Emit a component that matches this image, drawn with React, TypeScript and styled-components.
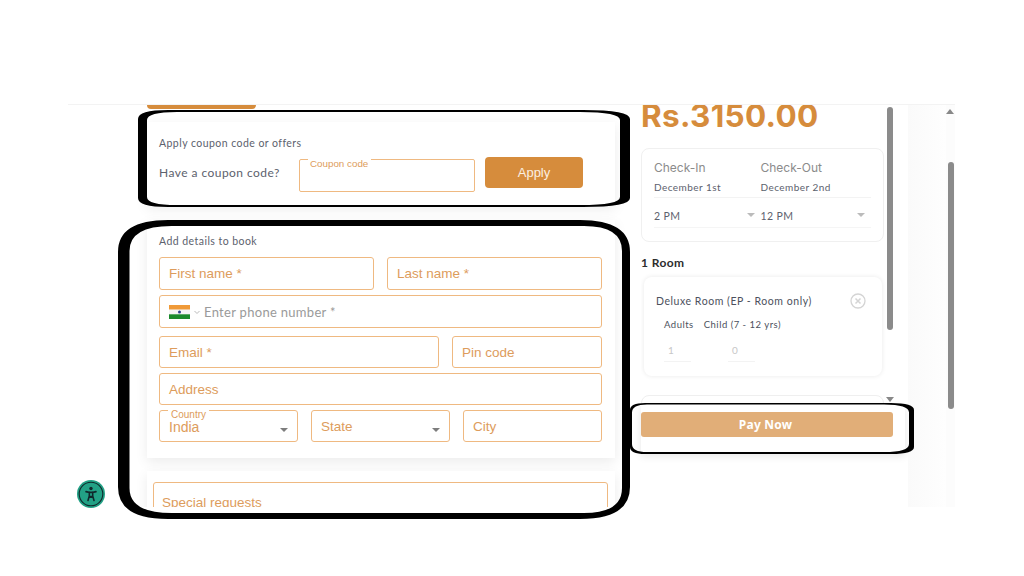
import React from "react";
import styled, { createGlobalStyle } from "styled-components";

const Global = createGlobalStyle`
  html, body { margin: 0; padding: 0; background: #fff; }
  * { box-sizing: border-box; }
`;
const orange = "#d68c3c";
const line = "#efb981";
const text = "#dd9c5c";
const ui = `"Lato", "Noto Sans", sans-serif`;
const arial = `"Liberation Sans", Arial, sans-serif`;

const Page = styled.div`
  position: relative; width: 1024px; height: 576px; overflow: hidden; padding: 104px 0 0 68px; background: #fff;
`;
const Frame = styled.div`
  display: flex; width: 887px; height: 403px; overflow: hidden; border-top: 1px solid #f3f3f3;
`;
const LeftColumn = styled.div`
  flex: 0 0 573px; padding: 0 26px 0 79px; overflow: hidden;
`;
const TopTab = styled.div`
  width: 109px; height: 4px; background: ${orange}; border-radius: 0 0 4px 4px;
`;
const Card = styled.section<{ $top: number; $h: number; $pad?: string }>`
  margin-top: ${(p) => p.$top}px; min-height: ${(p) => p.$h}px; background: #fff; padding: ${(p) => p.$pad ?? "14px 13px 0 12px"};
  box-shadow: 0 4px 12px rgba(0, 0, 0, 0.08);
`;
const CardTitle = styled.div`
  font: 400 10.5px/14px ${ui}; letter-spacing: 0.45px; color: #5c616d;
`;
const CouponRow = styled.div`
  display: flex; align-items: flex-start; margin-top: 7px;
`;
const CouponLabel = styled.span`
  flex: 0 0 140px; margin-top: 7px; font: 400 12px/18px ${ui}; letter-spacing: 0.45px; color: #5c616d;
`;
const CouponField = styled.fieldset`
  width: 176px; height: 37px; margin: -2.5px 0 0; padding: 0 0 0 8px; border: 1.5px solid ${line}; border-radius: 2px;
`;
const CouponLegend = styled.legend`
  padding: 0 3px 0 2px; font: 400 9.8px/10px ${arial}; color: ${text}; transform: translateY(4px);
`;
const ApplyButton = styled.button`
  width: 98px; height: 31px; margin: 0 0 0 10px; border: 0; border-radius: 4px; background: ${orange}; color: #fbefe2; font: 400 13px ${arial};
`;
const Form = styled.div`
  display: flex; flex-direction: column; gap: 5px; margin-top: 9px;
`;
const Row = styled.div<{ $top?: number }>`
  display: flex; gap: 13px; margin-top: ${(p) => p.$top ?? 0}px;
`;
const Field = styled.div<{ $w?: number; $h?: number }>`
  position: relative; display: flex; align-items: center; flex: ${(p) => (p.$w ? `0 0 ${p.$w}px` : "1")};
  height: ${(p) => p.$h ?? 32}px; padding-left: 9px; border: 1px solid ${line}; border-radius: 3px;
  font: 400 13.5px ${arial}; color: ${text}; background: #fff;
`;
const PhoneText = styled.span`
  margin-left: 3px; font: 400 13px ${ui}; letter-spacing: 0.3px; color: #9a9a9a;
`;
const Caret = styled.i`
  position: absolute; right: 9px; top: 17px; width: 0; height: 0;
  border-left: 4px solid transparent; border-right: 4px solid transparent; border-top: 4px solid #7d7d7d;
`;
const FloatLabel = styled.span`
  position: absolute; left: 8px; top: -2px; padding: 0 3px; background: #fff; font: 400 10px/11px ${arial}; color: ${text};
`;
const CountryValue = styled.span`
  margin-top: 2px; font-size: 14px;
`;
const RequestField = styled.div`
  height: 60px; margin: 0 7px 0 6px; padding: 12px 8px; border: 1px solid ${line}; border-radius: 3px; font: 400 13.5px ${arial}; color: ${text};
`;
const RightColumn = styled.div`
  flex: 0 0 267px; display: flex; flex-direction: column;
`;
const ScrollRow = styled.div`
  display: flex; height: 299px; overflow: hidden;
`;
const Summary = styled.div`
  flex: 0 0 245px;
`;
const Price = styled.div`
  margin-top: -8px; font: 700 31.5px/38px "Inter", sans-serif; letter-spacing: 0.3px; color: ${orange};
`;
const DatesCard = styled.div`
  height: 94px; margin: 13px 2px 0 0; padding: 11px 12px 0 12px; border: 1px solid #f0f0f0; border-radius: 8px;
`;
const DatesGrid = styled.div`
  display: grid; grid-template-columns: 106.5px 1fr;
`;
const DateHead = styled.div`
  font: 400 12px/15px "Inter", sans-serif; color: #8b8b8b;
`;
const DateValue = styled.div`
  height: 23px; padding-top: 5px; border-bottom: 1px solid #f3f3f3; font: 400 10px/14px ${ui}; letter-spacing: 0.45px; color: #5c616d;
`;
const TimeValue = styled.div`
  position: relative; height: 30px; padding-top: 11px; border-bottom: 1px solid #f5f5f5; font: 400 10.5px/14px ${ui}; letter-spacing: 0.4px; color: #5c616d;
`;
const SmallCaret = styled.i`
  position: absolute; right: 6px; top: 15px; width: 0; height: 0;
  border-left: 4.5px solid transparent; border-right: 4.5px solid transparent; border-top: 4px solid #bbb;
`;
const RoomTitle = styled.div`
  margin-top: 13px; font: 700 12px/15px ${ui}; letter-spacing: 0.4px; color: #2d2d2d;
`;
const RoomCard = styled.div`
  position: relative; height: 99px; margin: 7px 4px 0 3px; padding: 17px 12px 0 12px; border-radius: 8px; box-shadow: 0 0 5px rgba(0, 0, 0, 0.09);
`;
const RoomName = styled.div`
  font: 400 10.5px/14px ${ui}; letter-spacing: 0.55px; color: #4c515d;
`;
const GuestLabels = styled.div`
  display: flex; gap: 10px; margin: 10px 0 0 8px; font: 400 9.5px/14px ${ui}; letter-spacing: 0.5px; color: #4c515d;
`;
const GuestValues = styled.div`
  display: flex; gap: 37px; margin: 9px 0 0 8px;
`;
const GuestValue = styled.div`
  width: 27px; height: 21px; padding: 1px 0 0 4px; border-bottom: 1px solid #f3f3f3; font: 400 10px/16px ${ui}; color: #c7c7c7;
`;
const CloseIcon = styled.svg`
  position: absolute; right: 16px; top: 16px;
`;
const NextCard = styled.div`
  height: 30px; margin: 19px 2px 0 0; border: 1px solid #efefef; border-radius: 8px;
`;
const InnerBar = styled.div`
  flex: 0 0 7px; display: flex; flex-direction: column; align-items: center; justify-content: space-between; padding: 2px 0 1px;
`;
const InnerThumb = styled.div`
  width: 6px; height: 223px; border-radius: 3px; background: #8b8b8b;
`;
const ArrowDown = styled.i`
  margin-bottom: 1px; width: 0; height: 0; border-left: 4px solid transparent; border-right: 4px solid transparent; border-top: 5px solid #888;
`;
const PayBar = styled.div`
  height: 48px; padding-top: 8px; margin-right: 3px; background: #fff; box-shadow: 0 4px 8px rgba(0, 0, 0, 0.1);
`;
const PayButton = styled.button`
  display: block; width: 252px; height: 25px; padding: 0 3px 0 0; border: 0; border-radius: 3px; background: #e1ae78; color: #fff; font: 700 12px "Noto Sans", sans-serif; letter-spacing: 0.2px;
`;
const Gutter = styled.div`
  flex: 0 0 38px; background: linear-gradient(90deg, #fafafa, #fefefe);
`;
const OuterBar = styled.div`
  flex: 0 0 9px; display: flex; flex-direction: column; align-items: flex-end; background: #fcfcfc; padding-right: 1px;
`;
const ArrowUp = styled.i`
  margin: 4px 0 0; width: 0; height: 0; border-left: 4px solid transparent; border-right: 4px solid transparent; border-bottom: 5px solid #888;
`;
const OuterThumb = styled.div`
  width: 6px; height: 247px; margin-top: 48px; border-radius: 3px; background: #8b8b8b;
`;
const Annotations = styled.svg`
  position: absolute; inset: 0; pointer-events: none;
`;
const A11y = styled.svg`
  position: absolute; left: 77px; top: 480px;
`;

const rr = (x0: number, y0: number, x1: number, y1: number, lx: number, rx: number, ry: number) =>
  `M${x0 + lx} ${y0}H${x1 - rx}Q${x1} ${y0} ${x1} ${y0 + ry}V${y1 - ry}Q${x1} ${y1} ${x1 - rx} ${y1}H${x0 + lx}Q${x0} ${y1} ${x0} ${y1 - ry}V${y0 + ry}Q${x0} ${y0} ${x0 + lx} ${y0}Z`;

const IndiaFlag = () => (
  <svg width="21" height="14" viewBox="0 0 21 14">
    <rect width="21" height="4.7" fill="#f09a38" />
    <rect y="4.7" width="21" height="4.6" fill="#f4f4f4" />
    <rect y="9.3" width="21" height="4.7" fill="#1b8a2c" />
    <circle cx="10.5" cy="7" r="1.5" fill="#2b3f8c" />
  </svg>
);

export default function App() {
  return (
    <>
      <Global />
      <Page>
        <Frame>
          <LeftColumn>
            <TopTab />
            <Card $top={13} $h={83}>
              <CardTitle>Apply coupon code or offers</CardTitle>
              <CouponRow>
                <CouponLabel>Have a coupon code?</CouponLabel>
                <CouponField>
                  <CouponLegend>Coupon code</CouponLegend>
                </CouponField>
                <ApplyButton>Apply</ApplyButton>
              </CouponRow>
            </Card>
            <Card $top={15} $h={238}>
              <CardTitle>Add details to book</CardTitle>
              <Form>
                <Row>
                  <Field $h={33}>First name *</Field>
                  <Field $h={33}>Last name *</Field>
                </Row>
                <Row>
                  <Field $h={33}>
                    <IndiaFlag />
                    <svg width="8" height="8" viewBox="0 0 8 8" style={{ marginLeft: 3 }}>
                      <path d="M1.5 3l2.5 2.5L6.5 3" fill="none" stroke="#bbb" />
                    </svg>
                    <PhoneText>Enter phone number *</PhoneText>
                  </Field>
                </Row>
                <Row $top={3}>
                  <Field $w={280}>Email *</Field>
                  <Field>Pin code</Field>
                </Row>
                <Row>
                  <Field>Address</Field>
                </Row>
                <Row>
                  <Field $w={139}>
                    <FloatLabel>Country</FloatLabel>
                    <CountryValue>India</CountryValue>
                    <Caret />
                  </Field>
                  <Field $w={139}>
                    State
                    <Caret />
                  </Field>
                  <Field $w={139}>City</Field>
                </Row>
              </Form>
            </Card>
            <Card $top={13} $h={60} $pad="11px 0 0">
              <RequestField>Special requests</RequestField>
            </Card>
          </LeftColumn>
          <RightColumn>
            <ScrollRow>
              <Summary>
                <Price>Rs.3150.00</Price>
                <DatesCard>
                  <DatesGrid>
                    <DateHead>Check-In</DateHead>
                    <DateHead>Check-Out</DateHead>
                    <DateValue>December 1st</DateValue>
                    <DateValue>December 2nd</DateValue>
                    <TimeValue>
                      2 PM
                      <SmallCaret />
                    </TimeValue>
                    <TimeValue>
                      12 PM
                      <SmallCaret />
                    </TimeValue>
                  </DatesGrid>
                </DatesCard>
                <RoomTitle>1 Room</RoomTitle>
                <RoomCard>
                  <RoomName>Deluxe Room (EP - Room only)</RoomName>
                  <CloseIcon width="16" height="16" viewBox="0 0 16 16">
                    <circle cx="8" cy="8" r="7" fill="none" stroke="#d4d4d4" strokeWidth="1.3" />
                    <path d="M5.5 5.5l5 5M10.5 5.5l-5 5" stroke="#d4d4d4" strokeWidth="1.5" />
                  </CloseIcon>
                  <GuestLabels>
                    <span>Adults</span>
                    <span>Child (7 - 12 yrs)</span>
                  </GuestLabels>
                  <GuestValues>
                    <GuestValue>1</GuestValue>
                    <GuestValue>0</GuestValue>
                  </GuestValues>
                </RoomCard>
                <NextCard />
              </Summary>
              <InnerBar>
                <InnerThumb />
                <ArrowDown />
              </InnerBar>
            </ScrollRow>
            <PayBar>
              <PayButton>Pay Now</PayButton>
            </PayBar>
          </RightColumn>
          <Gutter />
          <OuterBar>
            <ArrowUp />
            <OuterThumb />
          </OuterBar>
        </Frame>
        <Annotations width="1024" height="576" viewBox="0 0 1024 576">
          <path fillRule="evenodd" d={rr(138, 110, 630, 207, 30, 47, 9) + rr(147, 112, 620, 205, 30, 40, 8)} />
          <path fillRule="evenodd" d={rr(118, 220, 630, 519, 50, 50, 32) + rr(129.5, 226, 622, 513, 42, 38, 25)} />
          <path fillRule="evenodd" d={rr(630, 403, 914, 454, 15, 23, 7) + rr(632, 404.5, 909, 452, 15, 25, 8)} />
        </Annotations>
        <A11y width="28" height="28" viewBox="0 0 28 28">
          <circle cx="14" cy="14" r="14" fill="#22a185" />
          <circle cx="14" cy="14" r="11.8" fill="none" stroke="#10282b" strokeWidth="1.1" />
          <circle cx="14" cy="8.5" r="1.7" fill="#10282b" />
          <path d="M9 11.6L12.3 12.4V16L11 20.5M19 11.6L15.7 12.4V16L17 20.5M12.3 12.4H15.7M12.3 16L14 17L15.7 16" fill="none" stroke="#10282b" strokeWidth="1.6" strokeLinecap="round" />
        </A11y>
      </Page>
    </>
  );
}
